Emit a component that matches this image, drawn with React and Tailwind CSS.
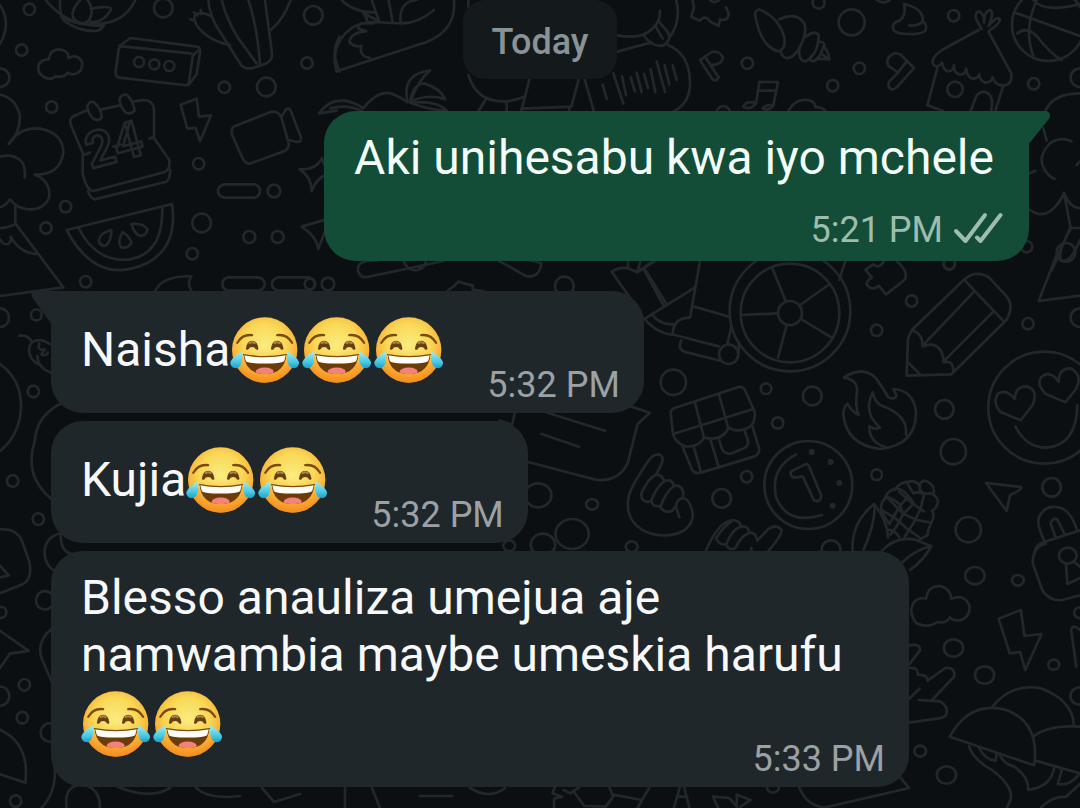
import React, { useId } from "react";

const THIRD = 1 / 3;

function Dots({ items }) {
  return items.map(([x, y, r], i) => <circle key={i} cx={x} cy={y} r={r} />);
}

function Paths({ items }) {
  return items.map((d, i) => <path key={i} d={d} />);
}

function Wallpaper() {
  return (
    <svg
      aria-hidden="true"
      viewBox="0 0 1080 808"
      preserveAspectRatio="xMidYMin slice"
      className="absolute inset-0 h-full w-full fill-none stroke-[#21272b] [&_*]:[vector-effect:non-scaling-stroke]"
      strokeWidth="2.7"
      strokeLinecap="round"
      strokeLinejoin="round"
    >
      {/* upper left */}
      <g transform={`scale(${THIRD})`}>
        <Dots
          items={[
            [88, 28, 17], [65, 150, 17], [155, 321, 17], [673, 262, 17], [596, 491, 17], [921, 189, 17],
            [197, 620, 17], [138, 684, 17], [257, 845, 17], [577, 761, 17], [748, 711, 18], [833, 711, 18],
            [822, 573, 19], [490, 24, 28], [940, 46, 28], [799, 261, 28], [605, 669, 28],
            [0, 233, 28], [417, 186, 15], [463, 193, 15], [508, 198, 15],
          ]}
        />
        <Paths
          items={[
            "M0 15 Q35 70 0 132",
            "M137 0 Q190 65 260 72 Q370 80 406 0",
            "M180 0 Q178 50 195 65 Q240 95 285 93 Q308 92 314 68",
            "M184 50 Q220 75 310 78",
            "M240 0 Q205 40 225 60 Q245 80 268 60 Q285 30 262 0",
            "M272 26 Q330 15 333 28 Q310 70 270 66",
            "M625 0 Q628 50 660 95 L720 190 Q730 208 755 205 L795 192 Q818 182 816 160 L795 0",
            "M665 0 Q680 60 715 115 L770 190",
            "M745 0 Q772 80 780 192",
            "M690 135 Q620 120 590 75 Q572 42 600 40 Q620 38 638 52",
            "M571 58 L583 62 M582 37 L592 46 M602 30 L605 42",
            "M872 0 Q850 60 812 90",
            "M130 230 Q110 218 116 195 Q123 178 146 178 Q150 148 178 148 Q206 150 206 174 Q232 160 246 185 Q250 215 225 222 Q212 225 203 218 Q192 234 168 229 Q148 243 130 230 Z",
            "M356 148 Q358 138 368 139 L570 160 Q580 160 578 172 L566 250 Q562 258 552 255 L358 233 Q346 230 347 216 Z",
            "M358 138 L392 114 L590 140 Q603 142 600 158 L590 222 L566 255 M580 165 L600 148",
            "M262 330 L222 348 Q206 356 212 374 L248 458 L248 520 Q258 570 280 573 L494 516 Q512 508 508 480 L462 415 L462 330 Q460 300 430 300 L403 304 M304 328 L360 316",
            "M248 466 L270 458 M340 440 L362 434 M448 416 L462 412 M264 572 Q268 592 284 598 L496 546 Q510 542 511 510",
            "M262 322 Q264 304 281 306 Q300 320 306 350 Q296 366 280 356 Q266 344 262 322 Z",
            "M358 298 Q364 282 380 284 Q398 298 404 332 Q394 344 378 338 Q362 324 358 298 Z",
            "M542 314 L590 296 L597 350 L633 346 L600 424 L587 384 L562 386 Z",
            "M700 380 L812 336 Q834 330 844 352 L866 430 Q868 446 852 454 L752 490 Q738 494 728 476 L696 404 Q692 388 700 380 Z",
            "M844 350 L858 328 Q866 322 872 332 L903 412 Q904 426 892 426 L866 420",
            "M672 553 H764 Q780 558 780 573 Q780 588 764 593 H672 Q654 588 654 573 Q654 558 672 553 Z",
            "M684 832 H776 Q794 837 794 852 Q794 867 776 872 H684 Q667 867 667 852 Q667 837 684 832 Z",
            "M834 832 H926 Q944 837 944 852 Q944 867 926 872 H834 Q816 867 816 852 Q816 837 834 832 Z",
            "M200 690 L516 612 Q535 740 440 790 Q290 860 200 690 Z",
            "M236 684 Q290 790 390 778 Q490 760 487 622",
            "M334 690 Q300 698 296 722 Q300 740 318 736 Q334 724 334 690 Z",
            "M368 696 Q350 726 364 742 Q384 746 394 730 Q392 712 368 696 Z",
            "M394 672 Q404 706 424 708 Q442 704 442 688 Q430 668 394 672 Z",
            "M0 284 Q50 295 60 350 Q60 400 26 432 Q60 380 120 386 Q190 400 190 458 Q180 526 104 524 Q150 540 148 590 Q135 630 85 628 Q50 626 30 598 Q20 615 0 622",
            "M0 470 Q40 460 65 485 Q78 505 74 532",
            "M46 615 V670 L190 862 L0 888 M0 684 Q24 684 46 672 M0 718 Q10 736 24 732 Q36 724 32 710 Q60 760 110 762",
            "M466 872 Q490 826 574 829 Q560 850 574 872",
            "M1020 215 Q990 160 1018 110",
            "M898 508 Q950 510 966 474 Q972 500 990 520 Q950 530 935 574 Q935 530 898 508 Z",
            "M905 680 L990 655 L955 746 Q950 710 905 680 Z",
          ]}
        />
        <text
          x="272"
          y="506"
          transform="rotate(-15 272 506)"
          fontFamily="Roboto, sans-serif"
          fontWeight="700"
          fontSize="150"
        >
          24
        </text>
      </g>

      {/* top centre */}
      <g transform={`translate(330 0) scale(${THIRD})`}>
        <Dots items={[[1180, 338, 20]]} />
        <Paths
          items={[
            "M20 214 Q5 170 25 130 Q60 66 130 66 Q190 70 215 70 Q260 72 312 30",
            "M20 214 L290 126 Q380 90 372 0",
            "M35 0 Q65 34 136 38 M98 36 Q110 50 112 65 M125 0 L148 66 M176 0 L188 68 M212 68 Q205 5 260 0 M105 42 L140 60",
            "M130 70 Q80 66 84 84 Q94 90 108 94 Q62 98 58 126 Q72 142 94 138 Q86 168 120 174",
            "M-32 340 Q-5 298 45 302 Q75 308 100 325 M-32 340 L20 332 M0 325 Q50 312 95 333 M100 325 Q150 262 195 285 Q218 296 232 306",
            "M232 306 Q215 220 300 212 Q264 240 240 308 M240 304 Q250 252 282 250 Q330 264 346 298 Q300 280 240 304 M240 308 Q320 300 350 332 Q300 330 240 308",
            "M415 0 V20 M415 225 Q440 305 520 304 Q550 304 582 290 M466 300 L444 335 M530 306 V335 M598 238 L574 335 M574 326 L724 320 L746 238 M764 238 L792 335 M718 322 V335",
            "M1038 0 Q1055 60 1020 110 M862 106 Q960 125 988 55 L990 32 M862 155 L965 127 M940 105 Q970 145 1000 136 Q1030 118 1010 92 L984 62 M975 76 L998 116",
            "M1012 134 Q1080 160 1080 250 Q1080 310 1030 335",
            "M818 254 L830 297 M850 220 L880 311 M876 229 L888 285 M902 232 L915 274 M920 218 L935 277 M942 222 L954 264 M962 208 L976 277 M980 185 L1005 276 M1004 196 L1018 254 M1028 196 L1040 240",
            "M1110 180 L1146 236 Q1160 248 1166 232 L1140 195 Q1180 195 1178 170 Q1168 152 1145 156 Z M1128 175 L1150 205",
            "M1088 0 L1092 22 L1084 50 L1110 62 Q1124 42 1142 66 L1166 77 L1170 58 Q1195 66 1196 40 L1188 22 M1140 0 Q1152 12 1168 0",
          ]}
        />
      </g>

      {/* top right */}
      <g transform={`translate(700 0) scale(${THIRD})`}>
        <Dots
          items={[
            [356, 8, 18], [455, 67, 39], [761, 47, 17], [142, 190, 17], [478, 205, 17], [398, 257, 17],
            [1001, 251, 17], [1140, 233, 28], [765, 268, 23], [980, 740, 17], [748, 792, 17], [1045, 74, 109],
          ]}
        />
        <Paths
          items={[
            "M530 0 Q550 14 570 0",
            "M165 42 Q170 20 190 34 Q236 56 252 108 Q260 148 234 154 Q180 138 165 42 Z",
            "M238 58 Q290 34 314 72 Q322 102 298 144 Q280 176 258 174 Q244 170 242 152",
            "M318 110 Q342 90 356 104 Q356 160 318 184 Q294 184 298 146 M356 124 Q380 128 370 140 Q360 178 340 184 Q326 182 332 170 M372 140 Q388 160 388 178 L350 176 M362 160 L388 178",
            "M612 12 Q672 26 668 62 Q684 76 676 92 Q664 104 628 102 Q590 102 582 92 Q570 68 600 62 Q620 42 612 12 M628 76 Q660 80 668 62",
            "M642 204 L602 164 Q584 154 570 168 Q556 182 566 198 L594 218 L568 244 Q560 260 574 268 Q584 270 592 260 Z M620 184 L594 218",
            "M836 90 L726 150 Q690 174 700 194 Q714 206 726 188 Q730 212 746 214 Q762 212 762 196 Q762 222 780 224 Q798 222 798 206 Q802 232 818 236 Q836 236 838 222 Q840 244 856 248 Q876 246 878 232 Q884 254 906 256 Q938 258 934 220 L866 96",
            "M845 88 L828 56 Q824 36 838 34 Q854 42 852 68 Q852 34 870 30 Q884 36 866 78 Q892 44 900 60 Q900 70 868 92",
            "M712 204 L682 316 L728 332 M910 258 L886 332 M812 332 L828 290 Q840 270 862 278 Q882 290 874 332",
            "M945 38 L1140 108 M1010 0 Q970 90 1000 168 M1000 0 Q1030 40 1140 12 M952 100 Q980 78 1010 108 Q1050 160 1085 180",
            "M168 310 L178 246 L234 246 L220 316 M176 272 L230 272",
            "M168 310 Q140 300 130 320 Q150 332 168 310 Z M220 316 Q196 312 188 326 Q206 334 220 316 Z",
            "M266 332 Q290 288 336 304 Q346 310 346 322 Q362 318 376 332",
            "M1036 332 Q1060 280 1140 280 M1030 385 L1040 422 M1114 424 Q1080 408 1050 430 Q1010 470 1034 510 Q1046 530 1064 536 M1130 495 L1140 484",
            "M988 520 L1006 512 M988 628 Q1030 660 1066 620 Q1084 600 1092 578 Q1110 624 1140 624 M1094 590 L1112 684 M1140 684 H1110 L1056 810 M1110 690 Q1070 760 1084 782 Q1110 792 1140 720",
          ]}
        />
      </g>

      {/* right of the received messages */}
      <g transform={`translate(640 255) scale(${THIRD})`}>
        <Dots
          items={[
            [928, 26, 17], [815, 138, 17], [710, 226, 17], [1164, 206, 17], [1320, 188, 28], [1278, -8, 28],
            [100, 382, 38], [378, 401, 16], [517, 423, 28], [413, 504, 17], [913, 463, 28], [940, 590, 38],
            [320, 665, 17], [245, 730, 28], [710, 659, 16], [1235, 697, 28], [985, 824, 38], [573, 884, 28],
            [450, 168, 181], [450, 174, 148], [450, 174, 36], [266, 298, 29], [1213, 458, 168], [505, 690, 132],
          ]}
        />
        <Paths
          items={[
            "M398 42 L438 140 M565 90 L480 150 M575 248 L486 194 M414 308 L440 210 M304 180 L414 175",
            "M616 18 L598 74 M0 46 L45 18 M14 42 L80 148 M16 190 L164 98 M180 18 L150 188 M162 155 L270 186 M35 178 Q60 210 104 208 M12 190 Q50 236 104 240 L236 274 M98 236 Q100 188 150 188 M124 256 Q112 280 132 290 L244 318 M274 215 L262 268 M296 290 V262",
            "M770 18 Q810 54 792 76 L738 118 L716 92 Q696 110 680 88 Q680 74 696 68 L676 44 L700 28 Q718 44 732 18",
            "M1250 0 L1196 138 L1320 122",
            "M816 224 L972 74 Q1010 42 1050 70 L1098 122 Q1124 150 1100 194 L934 358 L800 362 L804 250 Z M972 74 L1092 200 M1000 112 L848 272 M1058 172 L910 320 M816 226 Q848 236 848 274 Q904 252 912 322 Q940 314 940 350 M802 320 L842 360",
            "M92 472 Q94 462 106 458 L296 396 Q308 394 314 404 L344 470 Q350 520 298 526 Q278 528 266 516 Q250 560 192 548 Q176 578 136 574 Q100 560 98 530 Z M102 536 L340 462 M164 440 L192 548 M236 416 L264 516",
            "M128 576 L156 644 Q166 660 186 652 L344 604 Q362 596 356 576 L338 516 M162 578 L182 648 M212 556 L236 636 M238 556 L246 582 Q254 598 272 596 L312 580 Q326 574 324 556 L314 528",
            "M612 368 Q670 330 708 370 Q730 400 744 426 Q764 436 770 422 L760 402 Q820 406 828 470 Q830 570 720 582 Q620 570 610 480 Q610 456 622 446 Q636 470 656 480 Q644 456 652 400 Q646 372 612 368 Z",
            "M798 540 Q806 480 720 450 Q704 438 698 412 Q678 450 694 486 Q710 510 720 518 Q706 526 688 514 Q686 560 736 576",
            "M1142 496 L1080 470 Q1056 438 1074 416 Q1100 400 1124 432 Q1126 394 1160 394 Q1196 404 1178 450 Z M1276 442 L1216 416 Q1188 386 1204 366 Q1230 344 1256 380 Q1256 340 1292 340 Q1330 360 1308 402 Z M1126 514 Q1160 580 1220 578 Q1310 570 1312 450",
            "M468 598 Q390 640 408 726 Q440 812 546 780",
            "M452 650 L496 628 Q504 626 508 636 L544 722 Q542 744 522 736 L488 664 L464 668 Q450 666 452 650 Z",
            "M1038 684 L1144 696 Q1146 704 1110 720 L1100 768 Z",
            "M1214 860 Q1190 810 1196 790 Q1210 752 1250 756 Q1290 758 1312 828 M1248 850 L1232 806 Q1236 786 1252 794 L1274 838 M1182 898 Q1188 866 1210 862 L1320 826",
          ]}
        />
        <g className="fill-[#21272b]">
          <Dots items={[[515, 591, 5], [572, 621, 5], [598, 684, 5], [578, 752, 5]]} />
        </g>
      </g>

      {/* hands and corn cob */}
      <g transform={`translate(620 440) scale(${THIRD})`}>
        <Paths
          items={[
            "M108 104 Q130 66 128 54 Q120 36 98 48 Q80 64 36 142 Q18 180 26 216 Q38 262 90 280 Q150 296 194 270 Q226 244 216 210 Q208 176 188 174 Q168 180 168 200 L178 232",
            "M108 104 Q128 104 132 124 Q156 114 162 138 Q186 132 190 160 L188 174 M108 104 Q86 112 64 160 Q62 182 82 186 L94 182 Q96 202 120 198 Q130 220 152 214 Q164 208 168 196 M132 124 Q108 144 94 182 M162 138 Q136 158 122 198",
            "M258 332 Q296 242 340 240 Q362 244 362 260 Q384 256 388 278 Q408 276 412 302 L446 266 Q468 252 484 268 Q488 284 446 332 M362 260 Q336 268 320 310 M388 278 Q362 288 346 324 Q326 334 318 312 Q298 318 288 294 M338 242 Q310 260 290 292 M394 324 V332",
            "M698 332 Q692 250 762 192 Q802 240 804 292 M764 194 Q766 250 730 332 M786 332 Q826 290 882 298 L934 318 Q912 360 870 390 M842 372 Q880 332 932 318",
            "M784 216 Q780 180 802 172 Q820 176 838 192 L850 222 M792 180 Q800 154 824 146 Q850 146 868 172 L882 190 M824 150 Q840 122 880 124 Q896 128 900 140 M862 130 L880 160 Q894 152 912 164 M900 150 Q894 126 914 122 Q942 130 942 156 M900 150 Q910 164 926 160 Q950 160 954 186 Q950 206 936 212",
            "M784 216 L808 252 M788 212 L828 236 L856 262 L900 294 M802 172 L850 222 L892 240 M838 156 L880 192 L912 214 M864 170 L838 200 L808 252 M880 192 L850 222 L828 262 L812 284 M912 164 L902 206 L880 250 L854 290 M936 212 Q946 226 934 248 L912 244 L892 240 M934 248 Q924 268 922 286 L900 298 M804 270 Q824 268 838 292",
          ]}
        />
      </g>

      {/* lower right */}
      <g transform={`translate(500 400) scale(0.3699 ${THIRD})`}>
        <Dots
          items={[
            [103, 286, 36], [195, 402, 45], [116, 434, 33], [25, 437, 16], [249, 313, 16], [356, 440, 16],
            [1284, 527, 26], [1400, 541, 16], [1226, 744, 26], [1310, 825, 26], [1497, 794, 15], [1136, 1053, 16],
            [1207, 1125, 26], [1568, 888, 26], [1568, 638, 16], [738, 1162, 16], [1535, 467, 24],
          ]}
        />
        <Paths
          items={[
            "M350 18 L405 38 L372 72 L345 190 Q320 245 262 240 L76 186 M128 38 L284 92 M112 102 L214 140 M40 38 L32 78 M0 62 L32 74",
            "M1126 670 Q1104 640 1116 612 Q1128 590 1152 596 Q1156 558 1190 558 Q1218 566 1220 596 Q1258 580 1270 620 Q1268 660 1236 662 Q1222 660 1216 652 Q1206 672 1182 666 Q1158 686 1126 670 Z",
            "M1476 430 Q1440 440 1440 490 L1466 570 Q1484 604 1520 600 L1568 586 M1530 490 L1534 552 L1568 534 M1550 484 L1568 500",
            "M1348 656 L1408 630 L1418 708 L1464 702 L1420 810 L1406 756 L1378 760 Z M1568 690 Q1548 670 1544 690 L1558 800",
            "M1106 736 Q1136 730 1136 750 L1106 794 M1106 804 Q1130 800 1130 824 Q1156 824 1156 842 L1204 804 Q1232 802 1228 830 L1168 900 M1106 896 L1134 866 M1132 900 L1190 904 Q1214 920 1206 944 Q1200 954 1180 956 L1106 968",
            "M1216 1010 Q1270 900 1370 930 Q1460 970 1444 1096 Z M1330 922 Q1380 850 1460 864 Q1550 900 1552 980 M1442 1010 Q1480 974 1568 980 M1448 1082 L1568 1120",
            "M1268 1038 Q1280 1080 1330 1110 Q1390 1160 1380 1200 L1370 1224 M1296 1044 Q1310 1080 1340 1082 L1342 1062 M1352 1066 Q1360 1090 1390 1100 Q1430 1130 1428 1170 Q1490 1160 1498 1104 M1520 1106 L1508 1152 Q1540 1160 1568 1120 M1462 1224 Q1490 1190 1530 1190 L1568 1152",
            "M808 1160 Q830 1220 880 1222 L1106 1164 L1080 1130 M148 1162 L142 1180 L168 1190 L146 1196 V1224 M172 1170 L190 1180 L214 1162 M200 1176 L228 1218 L286 1220 L306 1190 L296 1162 M306 1184 L384 1200 L404 1162 M384 1200 L372 1224 M486 1162 L470 1224 M498 1162 L512 1224 M480 1190 H506 M576 1190 L620 1194 L640 1220 M576 1190 L590 1224 M640 1184 L678 1200 L650 1220 M640 1184 V1214",
          ]}
        />
      </g>

      {/* left edge */}
      <g transform={`translate(0 270) scale(${THIRD} 0.3431)`}>
        <Dots
          items={[
            [0, 139, 27], [109, 131, 16], [100, 354, 17], [38, 615, 17], [115, 726, 17], [135, 963, 27],
            [3, 998, 16], [73, 1209, 17], [0, 1242, 28], [67, 1305, 17], [149, 1348, 27], [47, 1548, 17],
          ]}
        />
        <Paths
          items={[
            "M57 192 Q85 188 96 210 Q120 196 150 216 M96 210 Q78 230 96 260 L106 268 M118 272 Q126 290 155 300 M118 214 Q110 236 134 232 L124 246 Q138 252 144 240 M104 268 L116 274 L112 250",
            "M0 274 Q65 320 63 400 Q60 480 0 528",
            "M190 386 Q110 420 104 500 Q70 600 155 668",
            "M0 756 Q50 752 66 790 L88 850 Q98 900 70 915 L0 942 M0 862 L26 890 L0 896",
            "M185 766 Q130 780 134 830 Q138 866 168 878 M182 766 Q180 830 226 828",
            "M0 1052 L86 1110 L30 1118 L0 1160 M155 1046 Q110 1080 124 1130 L155 1200",
            "M0 1340 Q90 1380 76 1494 L0 1470 M164 1450 Q170 1520 124 1568",
            "M200 1568 Q190 1500 250 1500 Q300 1510 300 1568",
          ]}
        />
      </g>

      {/* between the first two bubbles, and the bottom strip */}
      <g transform={`translate(310 255) scale(${THIRD})`}>
        <Dots items={[[0, 87, 16], [54, 87, 19], [763, 93, 28]]} />
        <Paths
          items={[
            "M200 16 Q140 14 144 46 Q150 70 172 66 L400 18 M280 16 Q290 46 318 46 Q346 42 348 16",
            "M564 16 L650 64 Q690 68 694 24 L660 16 M414 106 L434 92 L444 80 L488 92 V104 L520 108",
            "M975 150 L905 50 Q930 34 954 40 L982 52 L1032 16 M954 16 V38 M992 16 L982 52 M1002 44 L1060 150",
          ]}
        />
      </g>
      <path d="M118 787 Q150 800 170 788 M196 788 Q210 800 240 796 M262 788 L274 802 L300 794 M345 788 V808 M372 788 L380 808 M420 796 H452 M470 788 Q490 800 505 788" />
    </svg>
  );
}

function JoyEmoji() {
  const id = useId();
  const face = `${id}-face`;
  const shade = `${id}-shade`;
  const tear = `${id}-tear`;
  const mouth = `${id}-mouth`;
  return (
    <svg
      role="img"
      aria-label="face with tears of joy"
      viewBox="3 0 216 200"
      className="mt-2 inline-block h-[66px] w-[72px] overflow-visible align-[-17px]"
    >
      <defs>
        <radialGradient id={face} cx="0.5" cy="0.42" r="0.6">
          <stop offset="0" stopColor="#fbec80" />
          <stop offset="0.55" stopColor="#f9d856" />
          <stop offset="0.82" stopColor="#f8b63a" />
          <stop offset="1" stopColor="#ee8a22" />
        </radialGradient>
        <linearGradient id={shade} x1="0" y1="0" x2="0" y2="1">
          <stop offset="0.5" stopColor="#f68a1c" stopOpacity="0" />
          <stop offset="1" stopColor="#f68a1c" stopOpacity="0.7" />
        </linearGradient>
        <linearGradient id={tear} x1="0" y1="0" x2="0" y2="1">
          <stop offset="0" stopColor="#a5eef5" />
          <stop offset="0.6" stopColor="#4fcbe4" />
          <stop offset="1" stopColor="#1e9fc9" />
        </linearGradient>
        <clipPath id={mouth}>
          <path d="M43 114 Q107 126 173 114 Q167 173 107 173 Q49 173 43 114 Z" />
        </clipPath>
      </defs>
      <circle cx="107" cy="100" r="99" fill={`url(#${face})`} />
      <circle cx="107" cy="100" r="99" fill={`url(#${shade})`} />
      <g fill="none" stroke="#7a4a10" strokeLinecap="round">
        <path d="M24 78 Q40 51 69 55" strokeWidth="7" />
        <path d="M145 55 Q174 51 190 78" strokeWidth="7" />
      </g>
      <g fill="#68400f">
        <path d="M50 96 Q53 72 69 72 Q85 72 88 96 Q86 102 80 98 Q77 91 69 91 Q61 91 58 98 Q52 102 50 96 Z" />
        <path d="M126 96 Q129 72 145 72 Q161 72 164 96 Q162 102 156 98 Q153 91 145 91 Q137 91 134 98 Q128 102 126 96 Z" />
      </g>
      <g fill="none" stroke="#a98455" strokeWidth="6" strokeLinecap="round">
        <path d="M61 79 Q69 74 77 79" />
        <path d="M137 79 Q145 74 153 79" />
      </g>
      <g clipPath={`url(#${mouth})`}>
        <rect x="40" y="105" width="136" height="75" fill="#6b3c0a" />
        <ellipse cx="107" cy="165" rx="27" ry="12" fill="#f4827c" />
        <path d="M44 112 Q107 130 172 112 L166 134 Q157 141 107 141 Q57 141 50 134 Z" fill="#fffdf5" />
      </g>
      <path d="M43 114 Q107 126 173 114" fill="none" stroke="#7a4a10" strokeWidth="4" strokeLinecap="round" />
      <path d="M39 103 Q42 153 20 155 Q1 153 3 136 Q8 122 39 103 Z" fill={`url(#${tear})`} />
      <path d="M175 103 Q172 153 194 155 Q213 153 211 136 Q206 122 175 103 Z" fill={`url(#${tear})`} />
    </svg>
  );
}

function DoubleTick() {
  return (
    <svg
      role="img"
      aria-label="Delivered"
      viewBox="0 0 50 32"
      className="mb-[7px] h-8 w-[50px] fill-none stroke-[#9dbdae]"
      strokeWidth="4"
      strokeLinecap="round"
      strokeLinejoin="round"
    >
      <path d="M3 19 L12.5 29 L32 3" />
      <path d="M24 25.5 L27.5 29 L47.5 3" />
    </svg>
  );
}

function ReceivedBubble({ children, time, tail, overlay }) {
  return (
    <article
      className={`relative w-fit max-w-[858px] rounded-[32px] bg-[#20272a] pl-[30px] pr-6 pt-[18px] text-[#f7f8fa] ${
        tail ? "rounded-tl-none" : ""
      } ${overlay ? "grid" : "flex items-end gap-[41px]"}`}
    >
      {tail && (
        <svg
          aria-hidden="true"
          viewBox="0 0 21 34"
          className="absolute -left-5 top-0 h-[34px] w-[21px] fill-[#20272a]"
        >
          <path d="M21 0 H3 Q-1 1 1 6 L21 34 Z" />
        </svg>
      )}
      <p className="col-start-1 row-start-1 pb-[30px]">{children}</p>
      <time className="col-start-1 row-start-1 self-end justify-self-end whitespace-nowrap pb-[7px] text-[36px] leading-[42px] text-[#9ba1a4]">
        {time}
      </time>
    </article>
  );
}

export default function App() {
  return (
    <main className="relative min-h-screen overflow-hidden bg-[#0b0f12] font-['Roboto','Liberation_Sans',sans-serif]">
      <Wallpaper />
      <section
        aria-label="Conversation"
        className="relative flex flex-col items-start gap-2 px-[51px] pb-5 text-[48px] leading-[57px]"
      >
        <h2 className="mb-6 flex h-[79px] items-center self-center rounded-[22px] bg-[#14191c] px-[29px] pt-1 text-[36px] leading-[42px] font-medium text-[#899397]">
          Today
        </h2>

        <article className="relative mb-[22px] w-fit self-end rounded-[32px] rounded-tr-none bg-[#144d37] pb-[10px] pl-[30px] pr-[35px] pt-[18px] text-[#f3fcf7]">
          <svg
            aria-hidden="true"
            viewBox="0 0 22 34"
            className="absolute -right-[21px] top-0 h-[34px] w-[22px] fill-[#144d37]"
          >
            <path d="M0 0 H17 Q22 0 22 5 Q22 7 20 9 L0 34 Z" />
          </svg>
          <p>Aki unihesabu kwa iyo mchele</p>
          <div className="-mr-[9px] mt-[23px] flex items-end justify-end gap-[10px] text-[36px] leading-[42px] text-[#9dbdae]">
            <time>5:21 PM</time>
            <DoubleTick />
          </div>
        </article>

        <ReceivedBubble time="5:32 PM" tail>
          Naisha
          <JoyEmoji />
          <JoyEmoji />
          <JoyEmoji />
        </ReceivedBubble>

        <ReceivedBubble time="5:32 PM">
          Kujia
          <JoyEmoji />
          <JoyEmoji />
        </ReceivedBubble>

        <ReceivedBubble time="5:33 PM" overlay>
          Blesso anauliza umejua aje namwambia maybe umeskia harufu{" "}
          <span className="whitespace-nowrap">
            <JoyEmoji />
            <JoyEmoji />
          </span>
        </ReceivedBubble>
      </section>
    </main>
  );
}
